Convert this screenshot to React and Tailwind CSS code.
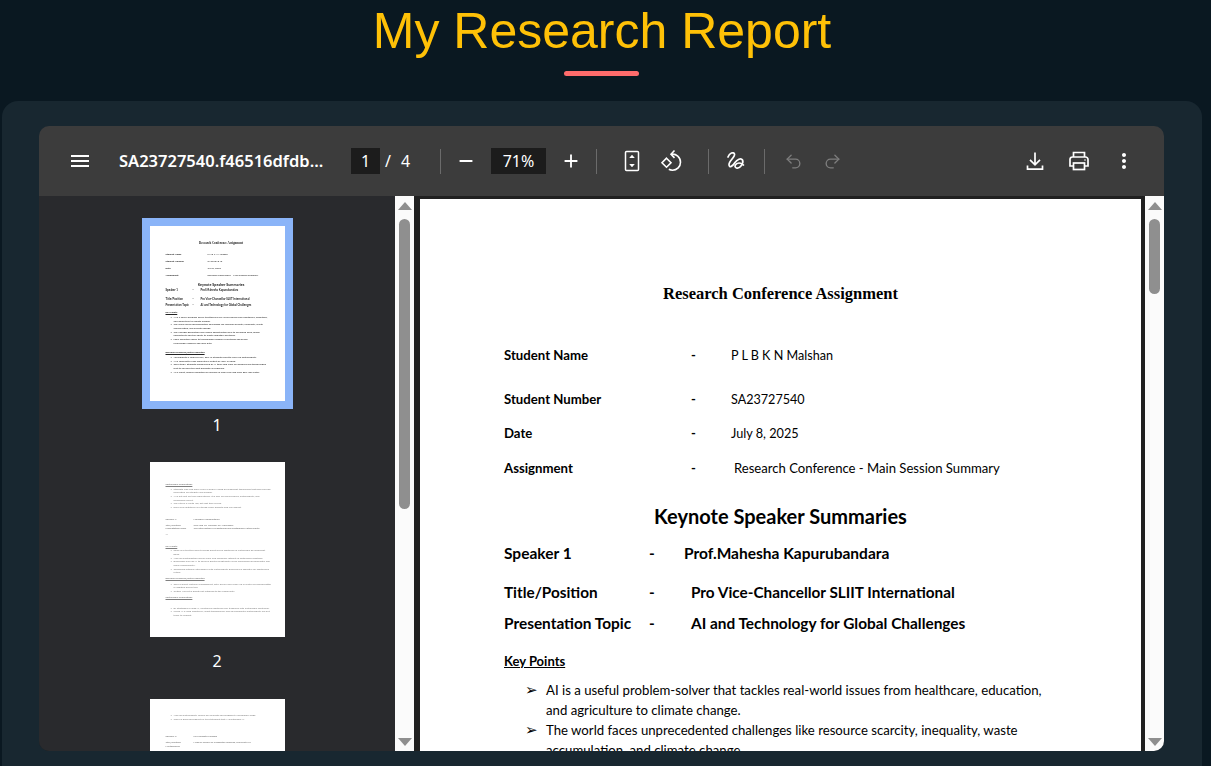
import React from 'react';
import { MdMenu, MdRemove, MdAdd, MdMoreVert } from 'react-icons/md';
import { Undo2, Redo2 } from 'lucide-react';

const uiFont = "font-['Noto_Sans',sans-serif]";
const docFont = "font-['Lato',sans-serif]";

const FitIcon = () => (
    <svg width="24" height="24" viewBox="0 0 24 24" fill="none" stroke="currentColor" strokeWidth="1.5">
        <rect x="5.500" y="2.500" width="13" height="19" rx="1" />
        <path d="M12 5.800l2.800 3.200H9.200zM12 18.200l-2.800-3.200h5.600z" fill="currentColor" stroke="none" />
    </svg>
);

const RotateIcon = () => (
    <svg width="24" height="24" viewBox="0 0 24 24" fill="none" stroke="currentColor" strokeWidth="1.6">
        <path d="M6.500 9.200L11 13.700 6.500 18.200 2 13.700z" />
        <path d="M11.500 5.200c4.700-.6 9 2.900 9 8 0 4.500-3.600 8-8 8-1.400 0-2.600-.3-3.700-.9" />
        <path d="M14.500 1.500l-3.500 3.700 3.500 3.700" />
    </svg>
);

const DrawIcon = () => (
    <svg width="24" height="24" viewBox="0 0 24 24" fill="none" stroke="currentColor" strokeWidth="1.7" strokeLinecap="round">
        <path d="M4 8C5.500 4 9.500 2.500 10.500 5c1 3-6 7-5.500 11 .4 3 3.500 1.500 6-2.500 2-3 6-5 7.500-2.500 1.500 3-2.500 9-6 8-3-1-1-5 2.500-5 1.500 0 3.500 1 4.500 2" />
    </svg>
);

const DownloadIcon = () => (
    <svg width="24" height="24" viewBox="0 0 24 24" fill="none" stroke="currentColor" strokeWidth="1.7">
        <path d="M12 3.500v12M7 10.800l5 5 5-5M4.500 16.500v3.700h15v-3.700" />
    </svg>
);

const PrintIcon = () => (
    <svg width="24" height="24" viewBox="0 0 24 24" fill="none" stroke="currentColor" strokeWidth="1.7">
        <path d="M6.500 8V3.500h11V8M6.500 17H3V10.500A2.500 2.500 0 0 1 5.500 8h13a2.500 2.500 0 0 1 2.500 2.500V17h-3.500" />
        <rect x="6.500" y="14" width="11" height="6.500" />
        <circle cx="18" cy="11" r=".8" fill="currentColor" stroke="none" />
    </svg>
);

const Sep = ({ className }) => <div className={`w-px h-[25px] bg-[#6b6b6b] ${className}`}></div>;

const Toolbar = () => (
    <div className={`h-[70px] shrink-0 flex items-center bg-[#3c3c3c] text-white pl-[29px] pr-[28px] ${uiFont}`}>
        <MdMenu size={24} />
        <span className="ml-[27px] w-[206px] text-[16.5px] font-semibold whitespace-nowrap">SA23727540.f46516dfdb...</span>
        <span className="ml-[26px] w-[29px] h-[26px] bg-[#1c1c1c] flex items-center justify-center text-[16px]">1</span>
        <span className="ml-[5px] w-[10px] text-[16px]">/</span>
        <span className="ml-[6px] w-[10px] text-[16px]">4</span>
        <Sep className="ml-[29px]" />
        <MdRemove size={22} className="ml-[14px]" />
        <span className="ml-[14px] w-[55px] h-[26px] bg-[#1c1c1c] flex items-center justify-center text-[16px]">71%</span>
        <MdAdd size={22} className="ml-[14px]" />
        <Sep className="ml-[14px]" />
        <div className="ml-[23px]"><FitIcon /></div>
        <div className="ml-[16px]"><RotateIcon /></div>
        <Sep className="ml-[24px] w-[2px]" />
        <div className="ml-[15px]"><DrawIcon /></div>
        <Sep className="ml-[16px]" />
        <Undo2 size={19} strokeWidth={1.7} className="ml-[19px] text-[#7d7d7d]" />
        <Redo2 size={19} strokeWidth={1.7} className="ml-[20px] text-[#7d7d7d]" />
        <div className="ml-auto flex items-center gap-[20px]">
            <DownloadIcon />
            <PrintIcon />
            <MdMoreVert size={24} className="ml-px" />
        </div>
    </div>
);

const Scrollbar = ({ thumbClass }) => (
    <div className="w-[19px] shrink-0 bg-[#fbfbfb] flex flex-col items-center">
        <div className="mt-[6px] w-0 h-0 border-x-[7px] border-x-transparent border-b-[8px] border-b-[#8f8f8f]"></div>
        <div className={`mt-[9px] w-[11px] rounded-full bg-[#8f8f8f] ${thumbClass}`}></div>
        <div className="mt-auto mb-[5px] w-0 h-0 border-x-[7px] border-x-transparent border-t-[8px] border-t-[#8f8f8f]"></div>
    </div>
);

const BL = 'bullet pl-[5px]';
const INFO = 'grid grid-cols-[34px_8px_1fr] [&>span:first-child]:font-bold';
const SPK = 'grid grid-cols-[27px_8px_1fr] font-bold text-[2.85px]!';
const SPK2 = 'grid grid-cols-[25px_3px_1fr] font-bold';

const firstThumb = [
    ['Research Conference Assignment', "text-center font-bold pr-[8px] text-[3.1px]! font-['Liberation_Serif',serif]"],
    [['Student Name', '-', 'P L B K N Malshan'], `mt-[7px] ${INFO}`],
    [['Student Number', '-', 'SA23727540'], `mt-[4px] ${INFO}`],
    [['Date', '-', 'July 8, 2025'], `mt-[3px] ${INFO}`],
    [['Assignment', '-', 'Research Conference - Main Session Summary'], `mt-[3px] ${INFO}`],
    ['Keynote Speaker Summaries', 'mt-[6px] text-center pr-[8px] font-bold text-[3.7px]!'],
    [['Speaker 1', '-', 'Prof.Mahesha Kapurubandara'], `mt-[2px] ${SPK}`],
    [['Title/Position', '-', 'Pro Vice-Chancellor SLIIT International'], `mt-[5px] ${SPK}`],
    [['Presentation Topic', '-', 'AI and Technology for Global Challenges'], `mt-[2px] ${SPK}`],
    ['Key Points', 'mt-[4px] font-bold underline'],
    ['AI is a useful problem-solver that tackles real-world issues from healthcare, education,', `mt-[1px] ${BL}`],
    ['and agriculture to climate change.', 'pl-[8px]'],
    ['The world faces unprecedented challenges like resource scarcity, inequality, waste', BL],
    ['accumulation, and climate change.', 'pl-[8px]'],
    ['The younger generation has unique opportunities due to advanced skills, global', BL],
    ['connectivity and the ability to create impactful solutions.', 'pl-[8px]'],
    ['Local expertise linked to technologies enables everything and builds', BL],
    ['from global research and local data.', 'pl-[8px]'],
    ['Research Evidence/Data Presented', 'mt-[6px] font-bold underline'],
    ['According to a 2023 survey, 60% of students want to work on sustainability.', `mt-[1px] ${BL}`],
    ['AI is forecast to raise agricultural output by 20% in 2030.', BL],
    ['Case study: Students empowered by AI tools find work on business and technologies', BL],
    ['built to forward the best prompts for suppliers.', 'pl-[8px]'],
    ['As a result, farmers reported an increase in crop yield and used 30% less water.', BL],
];

const secondThumb = [
    ['Sustainable Implications', 'font-bold underline'],
    ['Students who had more voice in public-facing development technology that goes beyond', `mt-[1px] ${BL}`],
    ['innovation for integrity and change.', 'pl-[8px]'],
    ['AI is not just for tech laboratories. It is also for inclusiveness, sustainability, and', BL],
    ['meaningful effect.', 'pl-[8px]'],
    ['The future is youth-led, not just tech-driven.', BL],
    ['Even local initiatives are strong when projects add real impact.', BL],
    [['Speaker 2', '-', 'Nishadee Malshanthani'], `mt-[8px] ${SPK2}`],
    [['Title/Position', '-', 'CEO and Co-Founder of Hypergears'], `mt-[2px] ${SPK2}`],
    [['Presentation Topic', '-', 'The intersection of Capitalism and Sustainable Futures with'], SPK2],
    ['AI', 'mt-[2px]'],
    ['Key Points', 'mt-[8px] font-bold underline'],
    ['Some fear that the push towards profit drives capitalism in sustainable development', `mt-[1px] ${BL}`],
    ['goals.', 'pl-[8px]'],
    ['And can capitalization moves work and consumer interest in sustainable practices.', BL],
    ['Businesses can use AI to achieve greater profitability while upholding environmental and', BL],
    ['social responsibility.', 'pl-[8px]'],
    ["Combining artificial intelligence with sustainability guidelines is essential for capitalism's", BL],
    ['future.', 'pl-[8px]'],
    ['Research Evidence/Data Presented', 'mt-[2px] font-bold underline'],
    ['Case in point: Pictorial management, data-driven work back-up in waste reclaiming better', `mt-[2px] ${BL}`],
    ['in addition before this.', 'pl-[8px]'],
    ['Critical Market is profits not intended to the community.', BL],
    ['Sustainable Implications', 'mt-[2px] font-bold underline'],
    ['By strategically using AI, healthcare capitalism can transform into sustainable capitalism.', `mt-[7px] ${BL}`],
    ['When AI is used effectively, profit transparency and environmental sustainability are not', BL],
    ['trade-to conflict.', 'pl-[8px]'],
];

const thirdThumb = [
    ['And can sustainability reform sell projects and judgment a meaningful edge.', BL],
    ['There is growing support for the statement that AI sustainable AI.', BL],
    [['Speaker 3', '-', 'Mr.Vishwath Perwani'], `mt-[14px] ${SPK2}`],
    [['Title/Position', '-', 'Head of School of Computer Sciences, University of'], `mt-[2px] ${SPK2}`],
    ['Northumbria', 'font-bold'],
];

const Thumb = ({ lines, selected, pageClass, className }) => (
    <div className={`border-8 ${selected ? 'border-[#8ab4f8]' : 'border-transparent'} ${className}`}>
        <div className={`w-[135px] h-[175px] bg-white overflow-hidden pl-[16px] blur-[0.25px] ${docFont} ${pageClass}`}>
            {lines.map(([text, cls], i) => (
                <div key={i} className={`text-[2.5px] leading-[3.7px] h-[3.7px] whitespace-nowrap ${cls}`}>
                    {cls.includes('bullet') && <span className="mr-[1.5px]">•</span>}
                    {Array.isArray(text) ? text.map((part, j) => <span key={j}>{part}</span>) : text}
                </div>
            ))}
        </div>
    </div>
);

const Sidebar = () => (
    <div className={`w-[356px] shrink-0 bg-[#292a2d] flex flex-col items-center pt-[22px] overflow-hidden text-white text-[16px] leading-5 ${uiFont}`}>
        <Thumb lines={firstThumb} selected pageClass="pt-[16px] text-[#222222]" />
        <div className="mt-[6px]">1</div>
        <Thumb lines={secondThumb} pageClass="pt-[21px] text-[#808080]" className="mt-[19px]" />
        <div className="mt-[6px]">2</div>
        <Thumb lines={thirdThumb} pageClass="pt-[15px] text-[#808080]" className="mt-[20px] shrink-0" />
    </div>
);

const InfoRow = ({ label, value, className, valueClass }) => (
    <div className={`grid grid-cols-[187px_40px_1fr] items-baseline leading-5 ${className}`}>
        <span className="font-bold text-[13.2px]">{label}</span>
        <span className="font-bold text-[13px]">-</span>
        <span className={valueClass}>{value}</span>
    </div>
);

const SpeakerRow = ({ label, value, className, valueClass }) => (
    <div className={`grid grid-cols-[145px_42px_1fr] leading-5 font-bold ${className}`}>
        <span>{label}</span>
        <span>-</span>
        <span className={valueClass}>{value}</span>
    </div>
);

const Bullet = ({ children }) => (
    <div className="flex text-[13.2px] leading-5 whitespace-nowrap pl-[21px]">
        <span className="w-[21px] font-['DejaVu_Sans',sans-serif] text-[15px]">➢</span>
        <div>{children}</div>
    </div>
);

const DocPage = () => (
    <div className={`flex-1 bg-white text-black overflow-hidden pl-[84px] pt-[83px] ${docFont}`}>
        <h2 className="text-center text-[16.5px] leading-6 font-bold font-['Liberation_Serif',serif] pr-[84px]">Research Conference Assignment</h2>

        <InfoRow className="mt-[39px]" label="Student Name" value="P L B K N Malshan" valueClass="text-[12.6px]" />
        <InfoRow className="mt-[23px]" label="Student Number" value="SA23727540" valueClass="text-[12.6px]" />
        <InfoRow className="mt-[13px]" label="Date" value="July 8, 2025" valueClass="text-[12.7px]" />
        <InfoRow className="mt-[15px]" label="Assignment" value="Research Conference - Main Session Summary" valueClass="pl-[3px] text-[13.1px]" />

        <h2 className="mt-[24px] text-center text-[20px] leading-7 font-bold pr-[84px]">Keynote Speaker Summaries</h2>

        <SpeakerRow className="mt-[13px] text-[15.5px]" label="Speaker 1" value="Prof.Mahesha Kapurubandara" valueClass="-ml-[7px]" />
        <SpeakerRow className="mt-[19px] text-[15.3px]" label="Title/Position" value="Pro Vice-Chancellor SLIIT International" />
        <SpeakerRow className="mt-[11px] text-[15.4px]" label="Presentation Topic" value="AI and Technology for Global Challenges" />

        <div className="mt-[18px] text-[13px] leading-5 font-bold underline">Key Points</div>
        <div className="mt-[9px]">
            <Bullet>AI is a useful problem-solver that tackles real-world issues from healthcare, education,<br />and agriculture to climate change.</Bullet>
            <Bullet>The world faces unprecedented challenges like resource scarcity, inequality, waste<br />accumulation, and climate change.</Bullet>
        </div>
    </div>
);

const App = () => {
    return (
        <div className="h-screen overflow-hidden bg-[#0a1821] pl-[2px] pr-[9px] font-['Liberation_Sans',sans-serif]">
            <h1 className="text-center text-[50px] leading-[60px] text-[#ffc107] pt-px">My Research Report</h1>
            <div className="flex justify-center pr-px mt-[10px]">
                <div className="w-[75px] h-[5px] rounded-full bg-[#ff6b6b]"></div>
            </div>

            <div className="mt-[25px] h-[700px] rounded-t-[16px] bg-[#182730] pt-[25px] pl-[37px] pr-[38px]">
                {/* PDF viewer */}
                <div className="h-[625px] flex flex-col rounded-[10px] overflow-hidden">
                    <Toolbar />
                    <div className="flex-1 min-h-0 flex bg-[#202020]">
                        <Sidebar />
                        <Scrollbar thumbClass="h-[290px]" />
                        <div className="flex-1 min-w-0 flex pt-[3px] pl-[6px] pr-[4px]">
                            <DocPage />
                        </div>
                        <Scrollbar thumbClass="h-[75px]" />
                    </div>
                </div>
            </div>
        </div>
    );
};

export default App;
